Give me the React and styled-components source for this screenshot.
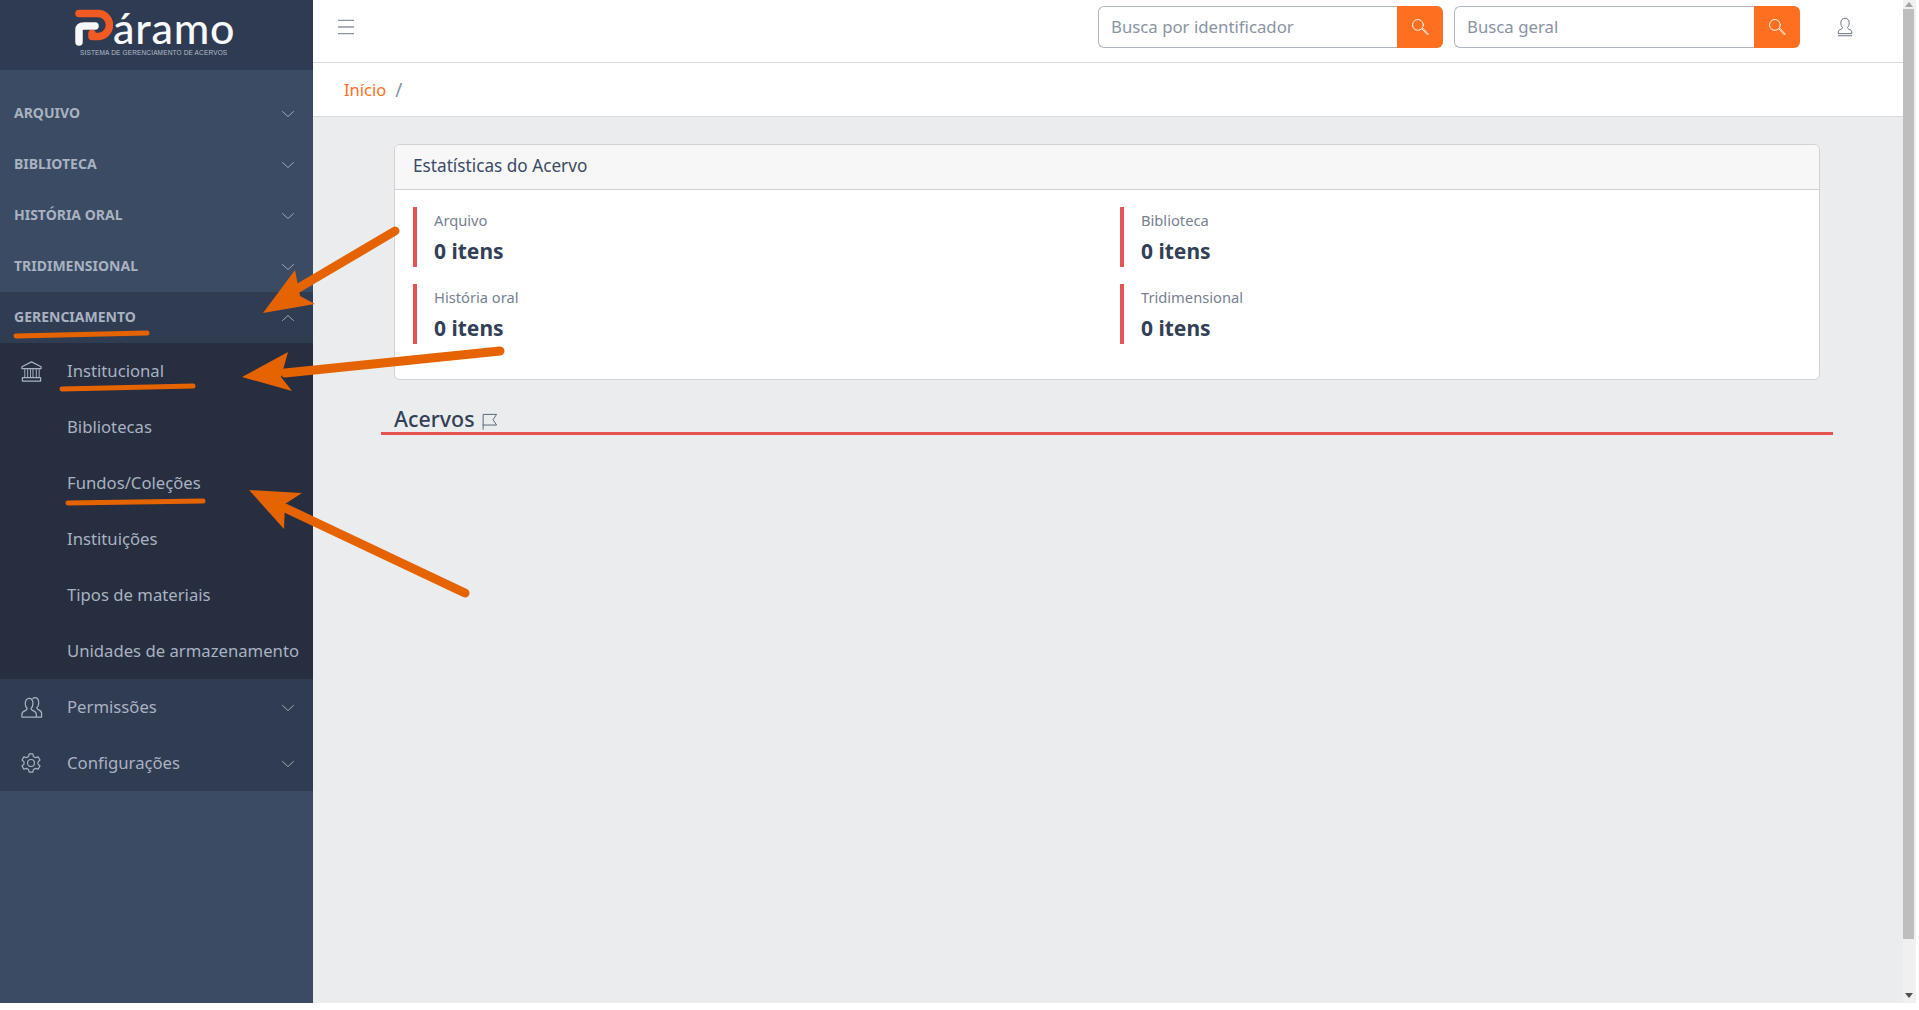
import React from 'react'
import styled, { createGlobalStyle } from 'styled-components'

const FONT = '"Noto Sans", "Open Sans", "Liberation Sans", sans-serif'

const GlobalStyle = createGlobalStyle`
  html, body {
    margin: 0;
    height: 100%;
    overflow: hidden;
    background: #fff;
    font-family: ${FONT};
  }
  * {
    box-sizing: border-box;
  }
`

const Page = styled.div`
  position: relative;
  display: flex;
  width: 1916px;
  height: 1003px;
  overflow: hidden;
  background: #ebecee;
`

const Sidebar = styled.aside`
  display: flex;
  flex-direction: column;
  flex: 0 0 313px;
  min-width: 0;
  background: #3a4b63;
`

const Brand = styled.div`
  display: flex;
  flex-direction: column;
  flex: 0 0 70px;
  padding: 9px 0 0 75px;
  background: #2f3b52;
`

const BrandRow = styled.div`
  display: flex;
  align-items: flex-end;
  height: 37px;
`

const BrandName = styled.span`
  color: #f7f8f9;
  font-family: Lato, sans-serif;
  font-size: 43px;
  font-weight: 500;
  line-height: 37px;
  letter-spacing: 0.8px;
`

const BrandTagline = styled.span`
  margin: 2px 0 0 5px;
  color: #b4bbc8;
  font-family: "Liberation Sans", sans-serif;
  font-size: 6.5px;
  line-height: 9px;
  letter-spacing: 0.15px;
  white-space: nowrap;
`

const Nav = styled.nav`
  display: flex;
  flex-direction: column;
  padding-top: 18px;
`

const SectionRow = styled.div`
  display: flex;
  align-items: center;
  justify-content: space-between;
  height: 51px;
  padding: 0 19px 2px 14px;
  color: #a9b2c1;
  background: ${(p) => (p.$open ? '#303c52' : 'transparent')};
  font-size: 14px;
  font-weight: 700;
`

const NavRow = styled.div`
  display: flex;
  align-items: center;
  height: 56px;
  padding: 0 19px 2px 20px;
  color: #a9b2c1;
  background: ${(p) => (p.$sub ? '#262e3f' : '#303c52')};
  font-size: 16.7px;
`

const NavIcon = styled.span`
  display: flex;
  align-items: center;
  flex: 0 0 47px;
  margin-top: 2px;
`

const NavLabel = styled.span`
  flex: 1;
  min-width: 0;
  white-space: nowrap;
`

const ChevronSlot = styled.span`
  display: flex;
  margin-top: 3px;
`

const Main = styled.main`
  display: flex;
  flex-direction: column;
  flex: 1;
  min-width: 0;
`

const Topbar = styled.header`
  display: flex;
  align-items: flex-start;
  height: 63px;
  padding: 6px 48px 0 25px;
  background: #fff;
  border-bottom: 1px solid #d8dbe0;
`

const MenuButton = styled.span`
  display: flex;
  margin: 13px auto 0 0;
`

const SearchGroup = styled.div`
  display: flex;
  width: ${(p) => p.$width}px;
  height: 42px;
  margin-left: ${(p) => p.$gap}px;
`

const SearchInput = styled.input`
  flex: 1;
  min-width: 0;
  padding: 0 12px 2px;
  color: #333;
  background: #fff;
  border: 1px solid #b1b7c1;
  border-right: none;
  border-radius: 6px 0 0 6px;
  outline: none;
  font-family: ${FONT};
  font-size: 16.8px;
  &::placeholder {
    color: #8a93a3;
    opacity: 1;
  }
`

const SearchButton = styled.span`
  display: flex;
  align-items: center;
  justify-content: center;
  flex: 0 0 46px;
  background: #ff6f20;
  border-radius: 0 6px 6px 0;
`

const UserButton = styled.span`
  display: flex;
  width: 20px;
  margin: 10px 0 0 35px;
`

const Breadcrumb = styled.div`
  display: flex;
  align-items: center;
  height: 54px;
  padding: 0 0 0 31px;
  background: #fff;
  border-bottom: 1px solid #d8dbe0;
  font-size: 16.5px;
`

const Crumb = styled.span`
  color: #ff6f20;
`

const CrumbDivider = styled.span`
  margin-left: 9px;
  color: #8a93a2;
  font-size: 19px;
`

const Content = styled.div`
  display: flex;
  flex-direction: column;
  padding: 27px 70px 0 68px;
`

const Card = styled.section`
  width: 1426px;
  height: 236px;
  margin-left: 13px;
  overflow: hidden;
  background: #fff;
  border: 1px solid #d0d2d5;
  border-radius: 6px;
`

const CardHeader = styled.div`
  display: flex;
  align-items: center;
  height: 45px;
  padding: 0 0 3px 18px;
  color: #3c4b64;
  background: #f7f7f7;
  border-bottom: 1px solid #cfd1d4;
  font-size: 17.2px;
`

const StatsGrid = styled.div`
  display: grid;
  grid-template-columns: 707px 1fr;
  grid-auto-rows: 60px;
  row-gap: 17px;
  padding: 17px 0 0 18px;
`

const Stat = styled.div`
  display: flex;
  flex-direction: column;
  padding-left: 17px;
  border-left: 4px solid #e55353;
`

const StatLabel = styled.span`
  margin-top: 3px;
  color: #768192;
  font-size: 14.7px;
  line-height: 20px;
`

const StatValue = styled.strong`
  margin-top: 6px;
  color: #323f56;
  font-size: 21px;
  font-weight: 700;
  line-height: 30px;
`

const SectionTitle = styled.h2`
  display: flex;
  align-items: center;
  gap: 6px;
  height: 55px;
  margin: 0;
  padding: 26px 0 0 13px;
  color: #323f56;
  border-bottom: 3px solid #e55353;
  font-size: 21.4px;
  font-weight: 500;
  line-height: 26px;
`

const FlagSlot = styled.span`
  display: flex;
  margin-top: 4px;
`

const Scrollbar = styled.div`
  display: flex;
  flex-direction: column;
  flex: 0 0 13px;
  background: #f0f0f0;
`

const ScrollArrow = styled.span`
  flex: 0 0 auto;
  width: 0;
  height: 0;
  margin: ${(p) => (p.$down ? 'auto 0 5px 2px' : '2px 0 2px 2px')};
  border-left: 4px solid transparent;
  border-right: 4px solid transparent;
  ${(p) => (p.$down ? 'border-top: 5px solid #505050;' : 'border-bottom: 5px solid #a3a3a3;')}
`

const ScrollThumb = styled.span`
  flex: 0 0 930px;
  width: 11px;
  background: #bebebe;
`

const Annotations = styled.svg`
  position: absolute;
  inset: 0;
  pointer-events: none;
`

const Line = ({ size = 11, children, color = 'currentColor', width = 1.1 }) => (
  <svg width={size} height={size} viewBox="0 0 24 24" fill="none" stroke={color} strokeWidth={width} strokeLinecap="round" strokeLinejoin="round">
    {children}
  </svg>
)

const Chevron = ({ up }) => (
  <ChevronSlot>
    <Line size={12} width={1.8}>
      <path d={up ? 'M1 17 12 7l11 10' : 'M1 7l11 10L23 7'} />
    </Line>
  </ChevronSlot>
)

const BankIcon = () => (
  <Line size={23} width={1.3}>
    <path d="M12 2 2 7v2h20V7z" />
    <path d="M5 9v9M8 9v9M11 9v9M13.5 9v9M17 9v9M20 9v9" strokeWidth="1" />
    <path d="M2.5 18.5h19v3.5h-19z" />
  </Line>
)

const PeopleIcon = () => (
  <Line size={23} width={1.3}>
    <path d="M2 22v-3c0-2 1.5-3 3.5-3.8 1.5-.6 2-1.2 2-2.2-1.4-1.2-2-2.8-2-5C5.5 4.500 7 2.500 9.500 2.500S13.500 4.500 13.500 8c0 2.200-.6 3.800-2 5 0 1 .5 1.600 2 2.200 2 .8 3.500 1.800 3.500 3.800v3z" />
    <path d="M13.500 2.600C14 2 15 1.800 15.500 1.800c2.500 0 4 2 4 5.500 0 2.200-.6 3.800-2 5 0 1 .5 1.600 2 2.200 2 .8 3 1.800 3 3.800V22h-5" />
  </Line>
)

const GearIcon = () => (
  <Line size={22} width={1.3}>
    <circle cx="12" cy="12" r="3.800" />
    <path d="M10 2h4l.7 3 2.200 1.200 2.900-.9 2 3.400-2.200 2.100v2.400l2.200 2.100-2 3.400-2.900-.9L14.700 19l-.7 3h-4l-.7-3-2.200-1.200-2.900.9-2-3.400 2.200-2.100v-2.400L2.200 8.700l2-3.400 2.900.9L9.300 5z" />
  </Line>
)

const SearchIcon = () => (
  <Line size={20} color="#fff" width={1.1}>
    <circle cx="9.500" cy="9.500" r="6.500" />
    <path d="M14.500 14.500 21 21.500l1-1-6.500-7" />
  </Line>
)

const UserIcon = () => (
  <Line size={22} color="#6b7484" width={1.2}>
    <path d="M4 19.500v-1.500c0-1.500 1-2.500 3-3.300 1.300-.5 2-1.200 2-2-1.200-1.200-2-3-2-5.700C7 3.500 9 1.500 12 1.500s5 2 5 5.500c0 2.700-.8 4.500-2 5.700 0 .8.7 1.500 2 2 2 .8 3 1.800 3 3.300v1.500z" />
    <path d="M4 22.500h16" />
  </Line>
)

const FlagIcon = () => (
  <Line size={17} color="#5b6778" width={1.4}>
    <path d="M3 23V2h19l-5 7.500 5 7.500H3" />
  </Line>
)

const MenuIcon = () => (
  <Line size={16} color="#8a93a2" width={2}>
    <path d="M0 2h24M0 12h24M0 22h24" />
  </Line>
)

const LogoMark = () => (
  <svg width="38" height="37" viewBox="0 0 38 37" fill="none" strokeWidth="7.500" strokeLinecap="round" strokeLinejoin="round">
    <path d="M4 33V21Q4 17 9 17h11" stroke="#f7f8f9" />
    <path d="M4 4.500H23a11.500 11.500 0 0 1 0 23h-6v-3" stroke="#f15a22" />
  </svg>
)

const Arrow = ({ from, to, head }) => (
  <g>
    <line x1={from[0]} y1={from[1]} x2={to[0]} y2={to[1]} stroke="#e66400" strokeWidth="9" strokeLinecap="round" />
    <polygon points={head} fill="#e66400" />
  </g>
)

const Stroke = ({ d }) => <path d={d} stroke="#e66400" strokeWidth="5" strokeLinecap="round" fill="none" />

const sections = ['ARQUIVO', 'BIBLIOTECA', 'HISTÓRIA ORAL', 'TRIDIMENSIONAL']
const subItems = ['Institucional', 'Bibliotecas', 'Fundos/Coleções', 'Instituições', 'Tipos de materiais', 'Unidades de armazenamento']
const stats = ['Arquivo', 'Biblioteca', 'História oral', 'Tridimensional']

const App = () => {
  return (
    <Page>
      <GlobalStyle />
      <Sidebar>
        <Brand>
          <BrandRow>
            <LogoMark />
            <BrandName>áramo</BrandName>
          </BrandRow>
          <BrandTagline>SISTEMA DE GERENCIAMENTO DE ACERVOS</BrandTagline>
        </Brand>
        <Nav>
          {sections.map((name) => (
            <SectionRow key={name}>
              {name}
              <Chevron />
            </SectionRow>
          ))}
          <SectionRow $open>
            GERENCIAMENTO
            <Chevron up />
          </SectionRow>
          {subItems.map((name, i) => (
            <NavRow key={name} $sub>
              <NavIcon>{i === 0 && <BankIcon />}</NavIcon>
              <NavLabel>{name}</NavLabel>
            </NavRow>
          ))}
          <NavRow>
            <NavIcon><PeopleIcon /></NavIcon>
            <NavLabel>Permissões</NavLabel>
            <Chevron />
          </NavRow>
          <NavRow>
            <NavIcon><GearIcon /></NavIcon>
            <NavLabel>Configurações</NavLabel>
            <Chevron />
          </NavRow>
        </Nav>
      </Sidebar>
      <Main>
        <Topbar>
          <MenuButton><MenuIcon /></MenuButton>
          <SearchGroup $width={345} $gap={0}>
            <SearchInput placeholder="Busca por identificador" />
            <SearchButton><SearchIcon /></SearchButton>
          </SearchGroup>
          <SearchGroup $width={346} $gap={11}>
            <SearchInput placeholder="Busca geral" />
            <SearchButton><SearchIcon /></SearchButton>
          </SearchGroup>
          <UserButton><UserIcon /></UserButton>
        </Topbar>
        <Breadcrumb>
          <Crumb>Início</Crumb>
          <CrumbDivider>/</CrumbDivider>
        </Breadcrumb>
        <Content>
          <Card>
            <CardHeader>Estatísticas do Acervo</CardHeader>
            <StatsGrid>
              {stats.map((name) => (
                <Stat key={name}>
                  <StatLabel>{name}</StatLabel>
                  <StatValue>0 itens</StatValue>
                </Stat>
              ))}
            </StatsGrid>
          </Card>
          <SectionTitle>
            Acervos
            <FlagSlot><FlagIcon /></FlagSlot>
          </SectionTitle>
        </Content>
      </Main>
      <Scrollbar>
        <ScrollArrow />
        <ScrollThumb />
        <ScrollArrow $down />
      </Scrollbar>
      <Annotations width="1916" height="1003" viewBox="0 0 1916 1003">
        <Arrow from={[395, 231]} to={[290, 293]} head="263,313 295,270 300,296 315,304" />
        <Arrow from={[500, 351]} to={[285, 373]} head="242,377 288,352 281,377 292,391" />
        <Arrow from={[465, 593]} to={[285, 508]} head="249,490 302,493 285,504 284,529" />
        <Stroke d="M16 336 147 333" />
        <Stroke d="M62 389 193 386" />
        <Stroke d="M68 503 203 501" />
      </Annotations>
    </Page>
  )
}

export default App
